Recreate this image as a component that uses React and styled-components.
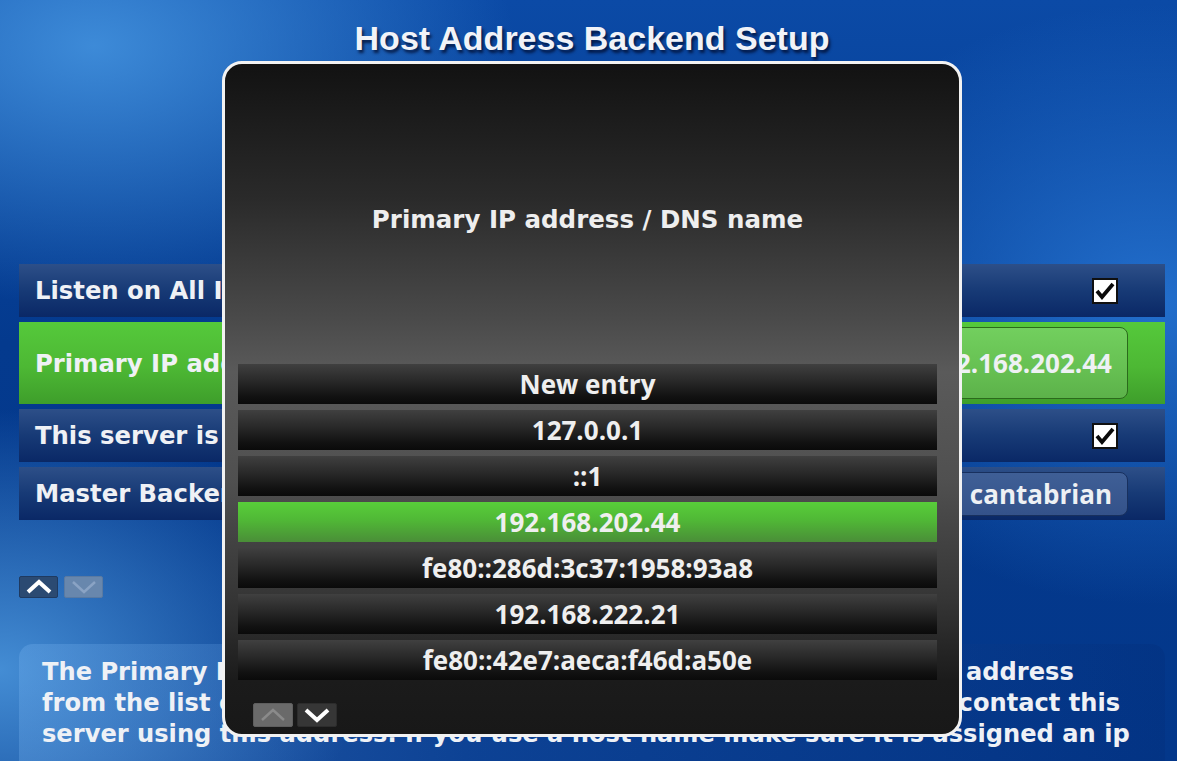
import React from 'react';
import styled, { createGlobalStyle } from 'styled-components';

const GlobalStyle = createGlobalStyle`
  html, body {
    margin: 0;
    padding: 0;
  }
  body {
    width: 1177px;
    height: 761px;
    overflow: hidden;
    background: #053e94;
  }
`;

const Screen = styled.div`
  position: relative;
  box-sizing: border-box;
  width: 1177px;
  height: 761px;
  overflow: hidden;
  display: flex;
  flex-direction: column;
  padding: 19px 12px 0 19px;
  background:
    radial-gradient(ellipse 420px 260px at 8% 6%, rgba(70, 150, 225, 0.85), rgba(70, 150, 225, 0) 100%),
    radial-gradient(ellipse 380px 300px at 98% 40%, rgba(40, 120, 215, 0.85), rgba(40, 120, 215, 0) 100%),
    radial-gradient(ellipse 360px 260px at 0% 88%, rgba(75, 150, 220, 0.9), rgba(75, 150, 220, 0) 100%),
    linear-gradient(180deg, #0b4aa6 0%, #043a8e 45%, #03378a 100%);
  font-family: 'DejaVu Sans', sans-serif;
`;

const Title = styled.h1`
  margin: 0;
  height: 38px;
  line-height: 38px;
  text-align: center;
  font-family: 'Liberation Sans', Arial, sans-serif;
  font-size: 34px;
  font-weight: bold;
  color: #f1f3f8;
  text-shadow: 2px 3px 3px rgba(0, 10, 40, 0.75);
`;

const Settings = styled.div`
  display: flex;
  flex-direction: column;
  gap: 5px;
  margin-top: 207px;
`;

const Row = styled.div`
  display: flex;
  align-items: center;
  justify-content: space-between;
  height: ${({ tall }) => (tall ? 82 : 53)}px;
  padding: 0 ${({ field }) => (field ? 37 : 47)}px 0 16px;
  box-sizing: border-box;
  background: ${({ selected }) =>
    selected
      ? 'linear-gradient(180deg, #55c93b 0%, #4db834 55%, #3e9e2b 100%)'
      : 'linear-gradient(180deg, #2d4f88 0%, #173a76 50%, #0a2866 100%)'};
`;

const Label = styled.span`
  font-size: 24.3px;
  font-weight: bold;
  color: #eff1f5;
  white-space: nowrap;
`;

const Field = styled.div`
  box-sizing: border-box;
  width: 520px;
  height: ${({ tall }) => (tall ? 72 : 44)}px;
  padding-right: 15px;
  display: flex;
  align-items: center;
  justify-content: flex-end;
  border-radius: 8px;
  border: 1px solid ${({ selected }) => (selected ? '#2b6a1c' : '#18305e')};
  background: ${({ selected }) =>
    selected
      ? 'linear-gradient(180deg, #72cf5e 0%, #66c052 60%, #5cb24a 100%)'
      : 'linear-gradient(180deg, #3f5f96 0%, #34528a 100%)'};
  font-family: 'Open Sans', 'Noto Sans', sans-serif;
  font-size: 26px;
  font-weight: 700;
  color: #eef1f4;
`;

const Box = styled.div`
  box-sizing: border-box;
  width: 26px;
  height: 26px;
  border: 2px solid #101010;
  background: #ffffff;
  display: flex;
  align-items: center;
  justify-content: center;
`;

const ArrowBar = styled.div`
  display: flex;
  gap: ${({ gap }) => gap}px;
  margin-top: ${({ top }) => top}px;
  padding-left: ${({ left }) => left || 0}px;
`;

const ArrowButton = styled.div`
  box-sizing: border-box;
  width: ${({ w }) => w}px;
  height: ${({ h }) => h}px;
  border-radius: 2px;
  display: flex;
  align-items: center;
  justify-content: center;
  background: ${({ bg }) => bg};
  border: 1px solid ${({ edge }) => edge};
`;

const Help = styled.div`
  flex: 1;
  margin-top: 46px;
  border-radius: 14px 14px 0 0;
  padding: 13px 23px 0;
  background: linear-gradient(90deg, rgba(120, 180, 240, 0.3) 0%, rgba(80, 140, 220, 0.12) 40%, rgba(0, 20, 80, 0.1) 100%);
`;

const HelpLine = styled.div`
  font-size: 24.15px;
  font-weight: bold;
  line-height: 31px;
  color: #eef1f6;
  white-space: nowrap;
`;

const Dialog = styled.div`
  position: absolute;
  left: 222px;
  top: 61px;
  width: 740px;
  height: 676px;
  box-sizing: border-box;
  border: 3px solid #f2f2f2;
  border-radius: 20px;
  padding: 0 22px 0 13px;
  display: flex;
  flex-direction: column;
  background: linear-gradient(
    180deg,
    #121212 0%,
    #2a2a2a 20%,
    #4a4a4a 38%,
    #5a5a5a 46%,
    #505050 62%,
    #353535 80%,
    #1b1b1b 92%,
    #181818 100%
  );
`;

const DialogTitle = styled.div`
  height: 300px;
  box-sizing: border-box;
  padding-top: 10px;
  display: flex;
  align-items: center;
  justify-content: center;
  font-size: 24.5px;
  font-weight: bold;
  color: #eeeeee;
`;

const List = styled.div`
  display: flex;
  flex-direction: column;
  gap: 6px;
`;

const Item = styled.div`
  height: 40px;
  line-height: 40px;
  text-align: center;
  font-family: 'Open Sans', 'Noto Sans', sans-serif;
  font-size: 26px;
  font-weight: 700;
  color: #efefef;
  background: ${({ selected }) =>
    selected
      ? 'linear-gradient(180deg, #58ce3a 0%, #50b836 45%, #4a8e38 100%)'
      : 'linear-gradient(180deg, #404040 0%, #2a2a2a 40%, #121212 80%, #0a0a0a 100%)'};
`;

const Chevron = ({ up, color, width = 3.5 }) => (
  <svg width="30" height="16" viewBox="0 0 30 16">
    <polyline
      points={up ? '4,13 15,3 26,13' : '4,3 15,13 26,3'}
      fill="none"
      stroke={color}
      strokeWidth={width}
      strokeLinejoin="miter"
    />
  </svg>
);

const Check = () => (
  <Box>
    <svg width="20" height="18" viewBox="0 0 20 18">
      <path d="M2 9 L7 15 L18 2" fill="none" stroke="#0a0a0a" strokeWidth="3.8" />
    </svg>
  </Box>
);

const entries = [
  'New entry',
  '127.0.0.1',
  '::1',
  '192.168.202.44',
  'fe80::286d:3c37:1958:93a8',
  '192.168.222.21',
  'fe80::42e7:aeca:f46d:a50e',
];

export default function App() {
  return (
    <Screen>
      <GlobalStyle />
      <Title>Host Address Backend Setup</Title>

      <Settings>
        <Row>
          <Label>Listen on All IP Addresses</Label>
          <Check />
        </Row>
        <Row tall selected field>
          <Label>Primary IP address / DNS name</Label>
          <Field tall selected>192.168.202.44</Field>
        </Row>
        <Row>
          <Label>This server is the Master Backend</Label>
          <Check />
        </Row>
        <Row field>
          <Label>Master Backend Name</Label>
          <Field>cantabrian</Field>
        </Row>
      </Settings>

      <ArrowBar top={56} gap={6}>
        <ArrowButton w={39} h={22} bg="#2b4a72" edge="#1f3a60">
          <Chevron up color="#ffffff" width={4} />
        </ArrowButton>
        <ArrowButton w={39} h={22} bg="#6887ad" edge="#5a7aa2">
          <Chevron color="#8aa3c4" width={2.5} />
        </ArrowButton>
      </ArrowBar>

      <Help>
        <HelpLine>The Primary IP address of this backend server. You can select an IP address</HelpLine>
        <HelpLine>from the list or type a DNS name or host name. Other systems will contact this</HelpLine>
        <HelpLine>server using this address. If you use a host name make sure it is assigned an ip</HelpLine>
      </Help>

      <Dialog>
        <DialogTitle>Primary IP address / DNS name</DialogTitle>
        <List>
          {entries.map((e, i) => (
            <Item key={e} selected={i === 3}>
              {e}
            </Item>
          ))}
        </List>
        <ArrowBar top={23} gap={4} left={15}>
          <ArrowButton w={40} h={24} bg="#6a6a6a" edge="#5e5e5e">
            <Chevron up color="#8a8a8a" width={2.5} />
          </ArrowButton>
          <ArrowButton w={40} h={24} bg="#363636" edge="#2c2c2c">
            <Chevron color="#ffffff" width={4} />
          </ArrowButton>
        </ArrowBar>
      </Dialog>
    </Screen>
  );
}
